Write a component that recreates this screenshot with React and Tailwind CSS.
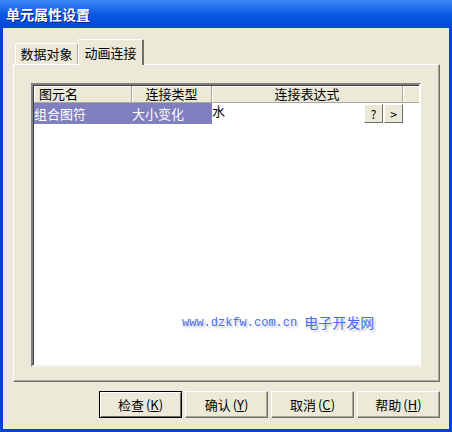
import React from "react";

const FONT = { fontFamily: '"Noto Sans CJK SC", "Noto Sans", sans-serif' };

function Key({ k }) {
  return <span className="ml-[2px]">(<span className="underline">{k}</span>)</span>;
}

function DlgButton({ label, k, isDefault }) {
  return (
    <button
      className={
        "w-[83px] h-[27px] flex items-center justify-center text-[13px] text-black bg-[#ece9d8] " +
        (isDefault
          ? "border border-black shadow-[inset_1px_1px_0_#fff,inset_-1px_-1px_0_#716f64]"
          : "border border-t-white border-l-white border-r-[#716f64] border-b-[#716f64] shadow-[inset_-1px_-1px_0_#aca899]")
      }
    >
      {label}
      <Key k={k} />
    </button>
  );
}

function SmallButton({ children }) {
  return (
    <div className="w-[19px] h-[19px] flex items-center justify-center text-[12px] leading-none bg-[#ece9d8] border border-t-white border-l-white border-r-[#716f64] border-b-[#716f64]">
      {children}
    </div>
  );
}

function HeaderCell({ children, className }) {
  return (
    <div className={"h-full flex items-center border-r border-r-[#aca899] shadow-[inset_1px_0_0_#fff] " + className}>
      {children}
    </div>
  );
}

export default function App() {
  return (
    <div className="w-[452px] h-[432px] flex flex-col bg-[#0842d4] text-[13px]" style={FONT}>
      {/* title bar */}
      <div className="h-[28px] flex items-center pl-[6px] bg-gradient-to-b from-[#3a86f8] via-[#0a5ae6] to-[#0348d6]">
        <span className="text-white font-bold text-[14px] [text-shadow:1px_1px_0_#0a1e8a]">单元属性设置</span>
      </div>

      <div className="flex-1 mx-[3px] mb-[3px] bg-[#ece9d8] flex flex-col">
        {/* tabs */}
        <div className="mt-[11px] pl-[12px] h-[25px] flex items-end">
          <div className="w-[63px] h-[21px] flex items-center justify-center border-t border-l border-r border-t-white border-l-white border-r-[#aca899] rounded-t-[2px]">
            数据对象
          </div>
          <div className="w-[66px] h-[26px] -mb-[1px] z-10 bg-[#ece9d8] flex items-center justify-center border-t border-l border-r-2 border-t-white border-l-white border-r-[#716f64] rounded-t-[2px]">
            动画连接
          </div>
        </div>

        {/* panel */}
        <div className="ml-[10px] mr-[9px] h-[318px] border border-t-white border-l-white border-r-[#716f64] border-b-[#716f64] shadow-[inset_-1px_-1px_0_#aca899] pt-[18px] pl-[17px] pr-[18px] pb-[14px] flex">
          <div className="relative flex-1 bg-white border-2 border-t-[#808080] border-l-[#808080] border-r-white border-b-[#f0f0f0] shadow-[inset_1px_1px_0_#404040] flex flex-col">
            {/* header */}
            <div className="h-[17px] ml-[1px] mt-[1px] flex bg-[#ece9d8] border-b border-b-[#aca899] shadow-[inset_0_1px_0_#fff]">
              <HeaderCell className="w-[98px] pl-[5px]">图元名</HeaderCell>
              <HeaderCell className="w-[80px] justify-center">连接类型</HeaderCell>
              <HeaderCell className="w-[191px] justify-center">连接表达式</HeaderCell>
              <div className="flex-1 shadow-[inset_1px_0_0_#fff]" />
            </div>
            {/* row */}
            <div className="h-[21px] ml-[1px] flex">
              <div className="w-[178px] flex items-center bg-[#8080c0] text-white">
                <span className="w-[98px]">组合图符</span>
                <span>大小变化</span>
              </div>
              <div className="w-[191px] flex justify-between">
                <span className="leading-none pt-[1px]">水</span>
                <div className="flex gap-[1px] pt-[1px]">
                  <SmallButton>?</SmallButton>
                  <SmallButton>&gt;</SmallButton>
                </div>
              </div>
            </div>

            {/* watermark */}
            <div className="absolute left-[149px] top-[227px] flex items-center gap-[7px] text-[#4a6cf4] [text-shadow:2px_2px_2px_#c8c8c8]">
              <span className="text-[12px]" style={{ fontFamily: '"Liberation Mono", monospace' }}>www.dzkfw.com.cn</span>
              <span className="text-[14px]">电子开发网</span>
            </div>
          </div>
        </div>

        {/* buttons */}
        <div className="mt-[9px] mr-[9px] flex justify-end gap-[3px]">
          <DlgButton label="检查" k="K" isDefault />
          <DlgButton label="确认" k="Y" />
          <DlgButton label="取消" k="C" />
          <DlgButton label="帮助" k="H" />
        </div>
      </div>
    </div>
  );
}
